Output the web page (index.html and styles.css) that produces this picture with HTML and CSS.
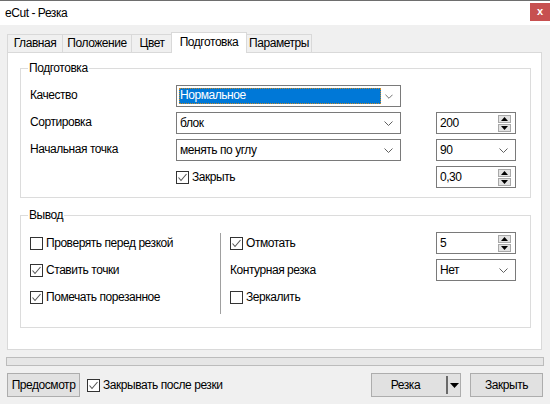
FILE: index.html
```html
<!DOCTYPE html>
<html>
<head>
<meta charset="utf-8">
<link rel="stylesheet" href="styles.css">
</head>
<body>
<div class="window">
  <div class="titlebar">
    <span class="title">eCut - Резка</span>
    <span class="close">x</span>
  </div>

  <div class="tabs">
    <div class="tab w-main">Главная</div>
    <div class="tab w-pos">Положение</div>
    <div class="tab w-color">Цвет</div>
    <div class="tab active w-prep">Подготовка</div>
    <div class="tab w-params">Параметры</div>
  </div>

  <div class="panel">
    <div class="group g1">
      <span class="legend">Подготовка</span>
      <div class="grid1">
        <div class="label">Качество</div>
        <div class="combo wide">
          <span class="sel">Нормальное</span>
          <svg class="chev" width="9" height="5" viewBox="0 0 9 5"><path d="M0.5 0.5 L4.5 4.5 L8.5 0.5" fill="none" stroke="#606060" stroke-width="1"/></svg>
        </div>
        <div></div>
        <div></div>

        <div class="label">Сортировка</div>
        <div class="combo wide">
          <span class="val">блок</span>
          <svg class="chev" width="9" height="5" viewBox="0 0 9 5"><path d="M0.5 0.5 L4.5 4.5 L8.5 0.5" fill="none" stroke="#606060" stroke-width="1"/></svg>
        </div>
        <div></div>
        <div class="spin">
          <span class="val">200</span>
          <span class="spinbtns">
            <span class="sb"><svg width="7" height="4" viewBox="0 0 7 4"><path d="M0 4 L3.5 0 L7 4 Z" fill="#000"/></svg></span>
            <span class="sb"><svg width="7" height="4" viewBox="0 0 7 4"><path d="M0 0 L3.5 4 L7 0 Z" fill="#000"/></svg></span>
          </span>
        </div>

        <div class="label">Начальная точка</div>
        <div class="combo wide">
          <span class="val">менять по углу</span>
          <svg class="chev" width="9" height="5" viewBox="0 0 9 5"><path d="M0.5 0.5 L4.5 4.5 L8.5 0.5" fill="none" stroke="#606060" stroke-width="1"/></svg>
        </div>
        <div></div>
        <div class="combo small">
          <span class="val">90</span>
          <svg class="chev" width="9" height="5" viewBox="0 0 9 5"><path d="M0.5 0.5 L4.5 4.5 L8.5 0.5" fill="none" stroke="#606060" stroke-width="1"/></svg>
        </div>

        <div></div>
        <label class="check">
          <svg class="box" width="13" height="13" viewBox="0 0 13 13"><rect x="0.5" y="0.5" width="12" height="12" fill="#fff" stroke="#333"/><path d="M2.5 6.5 L5 9.5 L10.5 3" fill="none" stroke="#555" stroke-width="1.1"/></svg>
          <span>Закрыть</span>
        </label>
        <div></div>
        <div class="spin">
          <span class="val">0,30</span>
          <span class="spinbtns">
            <span class="sb"><svg width="7" height="4" viewBox="0 0 7 4"><path d="M0 4 L3.5 0 L7 4 Z" fill="#000"/></svg></span>
            <span class="sb"><svg width="7" height="4" viewBox="0 0 7 4"><path d="M0 0 L3.5 4 L7 0 Z" fill="#000"/></svg></span>
          </span>
        </div>
      </div>
    </div>

    <div class="group g2">
      <span class="legend">Вывод</span>
      <div class="out">
        <div class="leftcol">
          <label class="check row">
            <svg class="box" width="13" height="13" viewBox="0 0 13 13"><rect x="0.5" y="0.5" width="12" height="12" fill="#fff" stroke="#333"/></svg>
            <span>Проверять перед резкой</span>
          </label>
          <label class="check row">
            <svg class="box" width="13" height="13" viewBox="0 0 13 13"><rect x="0.5" y="0.5" width="12" height="12" fill="#fff" stroke="#333"/><path d="M2.5 6.5 L5 9.5 L10.5 3" fill="none" stroke="#555" stroke-width="1.1"/></svg>
            <span>Ставить точки</span>
          </label>
          <label class="check row">
            <svg class="box" width="13" height="13" viewBox="0 0 13 13"><rect x="0.5" y="0.5" width="12" height="12" fill="#fff" stroke="#333"/><path d="M2.5 6.5 L5 9.5 L10.5 3" fill="none" stroke="#555" stroke-width="1.1"/></svg>
            <span>Помечать порезанное</span>
          </label>
        </div>
        <div class="sep"></div>
        <div class="grid2">
          <label class="check">
            <svg class="box" width="13" height="13" viewBox="0 0 13 13"><rect x="0.5" y="0.5" width="12" height="12" fill="#fff" stroke="#333"/><path d="M2.5 6.5 L5 9.5 L10.5 3" fill="none" stroke="#555" stroke-width="1.1"/></svg>
            <span>Отмотать</span>
          </label>
          <div class="spin">
            <span class="val">5</span>
            <span class="spinbtns">
              <span class="sb"><svg width="7" height="4" viewBox="0 0 7 4"><path d="M0 4 L3.5 0 L7 4 Z" fill="#000"/></svg></span>
              <span class="sb"><svg width="7" height="4" viewBox="0 0 7 4"><path d="M0 0 L3.5 4 L7 0 Z" fill="#000"/></svg></span>
            </span>
          </div>

          <div class="label">Контурная резка</div>
          <div class="combo small">
            <span class="val">Нет</span>
            <svg class="chev" width="9" height="5" viewBox="0 0 9 5"><path d="M0.5 0.5 L4.5 4.5 L8.5 0.5" fill="none" stroke="#606060" stroke-width="1"/></svg>
          </div>

          <label class="check">
            <svg class="box" width="13" height="13" viewBox="0 0 13 13"><rect x="0.5" y="0.5" width="12" height="12" fill="#fff" stroke="#333"/></svg>
            <span>Зеркалить</span>
          </label>
          <div></div>
        </div>
      </div>
    </div>
  </div>

  <div class="progress"></div>

  <div class="bottom">
    <button class="btn preview">Предосмотр</button>
    <label class="check closeafter">
      <svg class="box" width="13" height="13" viewBox="0 0 13 13"><rect x="0.5" y="0.5" width="12" height="12" fill="#fff" stroke="#333"/><path d="M2.5 6.5 L5 9.5 L10.5 3" fill="none" stroke="#555" stroke-width="1.1"/></svg>
      <span>Закрывать после резки</span>
    </label>
    <div class="spacer"></div>
    <div class="btn split">
      <span class="split-text">Резка</span>
      <span class="split-line"></span>
      <svg class="split-arrow" width="9" height="5" viewBox="0 0 9 5"><path d="M0 0 L9 0 L4.5 5 Z" fill="#000"/></svg>
    </div>
    <button class="btn closebtn">Закрыть</button>
  </div>
</div>
</body>
</html>
```

FILE: styles.css
```css
* { box-sizing: border-box; }

html, body {
  margin: 0;
  padding: 0;
}

body {
  width: 550px;
  height: 404px;
  overflow: hidden;
  background: #f0f0f0;
  font-family: "Liberation Sans", Arial, sans-serif;
  font-size: 12px;
  letter-spacing: -0.45px;
  color: #000;
}

.window {
  width: 550px;
  height: 404px;
  display: flex;
  flex-direction: column;
}

.titlebar {
  height: 25px;
  background: #fff;
  border-top: 1px solid #6e6e6e;
  display: flex;
  align-items: flex-start;
  justify-content: space-between;
}

.title {
  margin: 5px 0 0 5px;
  font-size: 12px;
}

.close {
  margin-top: 2px;
  width: 20px;
  height: 18px;
  background: #c75050;
  color: #fff;
  font-weight: bold;
  font-size: 11px;
  line-height: 17px;
  text-align: center;
  letter-spacing: 0;
}

/* tabs */
.tabs {
  margin-top: 7px;
  padding-left: 7px;
  height: 20px;
  display: flex;
  align-items: flex-end;
  position: relative;
  z-index: 2;
}

.tab {
  height: 18px;
  border: 1px solid #d9d9d9;
  border-bottom: none;
  border-right: none;
  background: #f0f0f0;
  text-align: center;
  line-height: 17px;
  white-space: nowrap;
}

.tab.w-main { width: 55px; }
.tab.w-pos { width: 69px; }
.tab.w-color { width: 41px; }
.tab.w-params { width: 65px; border-right: 1px solid #d9d9d9; border-left: none; }

.tab.active {
  width: 76px;
  height: 21px;
  margin-bottom: -1px;
  margin-left: -1px;
  background: #fff;
  border: 1px solid #d9d9d9;
  border-bottom: none;
  line-height: 18px;
}

.panel {
  margin-left: 7px;
  width: 535px;
  height: 298px;
  background: #fff;
  border: 1px solid #d9d9d9;
  padding: 15px 0 0 12px;
}

/* group boxes */
.group {
  position: relative;
  width: 511px;
  border: 1px solid #dcdcdc;
}

.legend {
  position: absolute;
  top: -8px;
  left: 7px;
  padding: 0 1px;
  background: #fff;
  line-height: 14px;
}

.g1 {
  padding: 16px 9px 9px 9px;
}

.g2 {
  margin-top: 17px;
  padding: 16px 9px 13px 9px;
}

.grid1 {
  display: grid;
  grid-template-columns: 146px 225px 35px 80px;
  grid-auto-rows: 22px;
  row-gap: 5px;
  align-items: center;
}

.label {
  white-space: nowrap;
}

.grid1 .label {
  align-self: start;
  padding-top: 3px;
}

/* combo */
.combo, .spin {
  height: 22px;
  border: 1px solid #7a7a7a;
  background: #fff;
  display: flex;
  align-items: center;
  position: relative;
}

.combo.wide { width: 225px; }
.combo.small, .spin { width: 80px; }

.combo .val, .spin .val {
  padding-left: 3px;
  flex: 1;
  white-space: nowrap;
}

.combo .chev {
  margin-right: 7px;
  margin-left: 4px;
}

.sel {
  margin: 2px;
  height: 16px;
  width: 202px;
  background: #0078d7;
  color: #fff;
  padding-left: 1px;
  line-height: 15px;
  outline: 1px dotted #c88a2a;
  outline-offset: -1px;
  flex: none;
  margin-right: auto;
}

/* spin */
.spinbtns {
  display: flex;
  flex-direction: column;
  gap: 1px;
  margin-right: 4px;
}

.sb {
  width: 13px;
  height: 8px;
  background: #e3e3e3;
  border: 1px solid #a8a8a8;
  display: flex;
  align-items: center;
  justify-content: center;
}

/* checkbox */
.check {
  display: flex;
  align-items: center;
  white-space: nowrap;
  height: 22px;
}

.check .box {
  flex: none;
  margin-right: 3px;
}

/* output group */
.out {
  display: flex;
  align-items: flex-start;
}

.leftcol {
  width: 190px;
  display: flex;
  flex-direction: column;
  gap: 5px;
}

.sep {
  width: 1px;
  height: 81px;
  margin-top: 1px;
  background: #a0a0a0;
  margin-right: 9px;
}

.grid2 {
  display: grid;
  grid-template-columns: 206px 80px;
  grid-auto-rows: 22px;
  row-gap: 5px;
  align-items: center;
}

/* progress */
.progress {
  margin: 7px 0 0 6px;
  width: 538px;
  height: 9px;
  background: #e6e6e6;
  border: 1px solid #bcbcbc;
}

/* bottom bar */
.bottom {
  margin-top: 7px;
  padding: 0 7px;
  height: 24px;
  display: flex;
  align-items: center;
}

.btn {
  height: 24px;
  background: #e1e1e1;
  border: 1px solid #adadad;
  font-family: inherit;
  font-size: 12px;
  letter-spacing: -0.45px;
  color: #000;
  padding: 0;
  margin: 0;
}

.preview { width: 73px; }

.closeafter {
  margin-left: 7px;
}

.spacer { flex: 1; }

.split {
  width: 90px;
  display: flex;
  align-items: center;
}

.split-text {
  width: 74px;
  text-align: center;
  padding-right: 7px;
}

.split-line {
  width: 2px;
  height: 18px;
  background: #6a6a6a;
}

.split-arrow {
  margin-left: 2px;
}

.closebtn {
  margin-left: 9px;
  width: 73px;
}
```
